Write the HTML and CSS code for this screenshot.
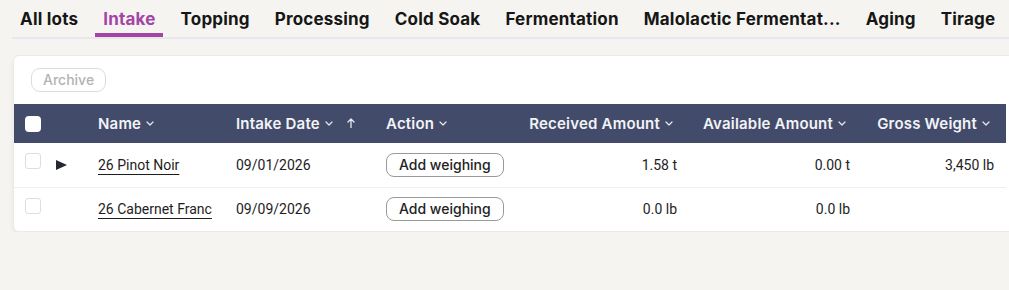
FILE: index.html
```html
<!DOCTYPE html>
<html>
<head>
<meta charset="utf-8">
<link rel="stylesheet" href="styles.css">
</head>
<body>
<nav class="tabs">
  <a class="tab">All lots</a>
  <a class="tab active">Intake</a>
  <a class="tab">Topping</a>
  <a class="tab">Processing</a>
  <a class="tab">Cold Soak</a>
  <a class="tab">Fermentation</a>
  <a class="tab">Malolactic Fermentat...</a>
  <a class="tab">Aging</a>
  <a class="tab">Tirage</a>
</nav>
<section class="card">
  <div class="toolbar"><button class="archive">Archive</button></div>
  <table class="grid">
    <colgroup>
      <col class="c-check"><col class="c-exp"><col class="c-name"><col class="c-date"><col class="c-action"><col class="c-recv"><col class="c-avail"><col class="c-gross">
    </colgroup>
    <thead>
      <tr>
        <th class="chk"><span class="hbox"></span></th>
        <th></th>
        <th>Name<svg class="chev" viewBox="0 0 8 5"><path d="M1 1l3 3 3-3"/></svg></th>
        <th>Intake Date<svg class="chev" viewBox="0 0 8 5"><path d="M1 1l3 3 3-3"/></svg><svg class="sort" viewBox="0 0 8 10"><path d="M4 9.5V1M1 4l3-3 3 3"/></svg></th>
        <th>Action<svg class="chev" viewBox="0 0 8 5"><path d="M1 1l3 3 3-3"/></svg></th>
        <th class="num">Received Amount<svg class="chev" viewBox="0 0 8 5"><path d="M1 1l3 3 3-3"/></svg></th>
        <th class="num">Available Amount<svg class="chev" viewBox="0 0 8 5"><path d="M1 1l3 3 3-3"/></svg></th>
        <th class="num">Gross Weight<svg class="chev" viewBox="0 0 8 5"><path d="M1 1l3 3 3-3"/></svg></th>
      </tr>
    </thead>
    <tbody>
      <tr>
        <td class="chk"><span class="rbox"></span></td>
        <td class="exp"><svg class="play" viewBox="0 0 11 10"><path d="M0 0L11 5L0 10Z"/></svg></td>
        <td><a class="lot">26 Pinot Noir</a></td>
        <td>09/01/2026</td>
        <td><button class="weigh">Add weighing</button></td>
        <td class="num">1.58 t</td>
        <td class="num">0.00 t</td>
        <td class="num">3,450 lb</td>
      </tr>
      <tr>
        <td class="chk"><span class="rbox"></span></td>
        <td class="exp"></td>
        <td><a class="lot">26 Cabernet Franc</a></td>
        <td>09/09/2026</td>
        <td><button class="weigh">Add weighing</button></td>
        <td class="num">0.0 lb</td>
        <td class="num">0.0 lb</td>
        <td class="num"></td>
      </tr>
    </tbody>
  </table>
</section>
</body>
</html>
```
FILE: styles.css
```css
html, body {
  margin: 0;
  padding: 0;
  background: #f5f4f0;
  overflow: hidden;
  font-family: Inter, "Noto Sans", sans-serif;
  color: #1c1c1c;
}

.tabs {
  display: flex;
  margin: 0 0 0 12px;
  height: 37px;
  border-bottom: 2px solid #e8e7ef;
  white-space: nowrap;
}

.tab {
  display: block;
  padding: 9px 7px 0 8px;
  margin-right: 10px;
  font-size: 17px;
  font-weight: 700;
  letter-spacing: 0.2px;
  line-height: 20px;
  color: #161616;
  border-bottom: 4px solid transparent;
  box-sizing: border-box;
  height: 37px;
}

.tab.active {
  color: #a445a6;
  border-bottom-color: #a445a6;
}

.card {
  margin: 16px 0 0 13px;
  width: 1040px;
  background: #fff;
  border: 1px solid #ebeae6;
  border-radius: 6px;
  box-shadow: 0 3px 5px rgba(0, 0, 0, 0.06);
  overflow: hidden;
}

.toolbar {
  padding: 12px 17px 12px;
}

.archive {
  font-family: Inter, sans-serif;
  font-size: 14px;
  font-weight: 500;
  color: #b3b3b3;
  background: #fff;
  border: 1px solid #dcdcdc;
  border-radius: 9px;
  height: 24px;
  padding: 0 11px;
  line-height: 20px;
}

.grid {
  border-collapse: collapse;
  table-layout: fixed;
  width: 992px;
}

.c-check { width: 30px; }
.c-exp { width: 42px; }
.c-name { width: 138px; }
.c-date { width: 150px; }
.c-action { width: 142px; }
.c-recv { width: 173px; }
.c-avail { width: 173px; }
.c-gross { width: 144px; }

thead tr {
  background: #424c6a;
  height: 39px;
}

th {
  color: #f2f3f7;
  font-size: 15px;
  font-weight: 600;
  letter-spacing: 0.2px;
  text-align: left;
  padding: 0 12px;
  white-space: nowrap;
  overflow: hidden;
}

th.num { text-align: right; padding-right: 16px; }
td.num { text-align: right; }

th.chk, td.chk { padding: 0 0 0 11px; }

.hbox {
  display: block;
  width: 16px;
  height: 16px;
  background: #fff;
  border-radius: 4px;
}

.chev {
  width: 8px;
  height: 5px;
  margin-left: 5px;
  vertical-align: 3px;
  fill: none;
  stroke: #e8eaf0;
  stroke-width: 1.2;
  stroke-linecap: round;
  stroke-linejoin: round;
}

.sort {
  width: 8px;
  height: 10px;
  margin-left: 14px;
  vertical-align: 1px;
  fill: none;
  stroke: #e8eaf0;
  stroke-width: 1.3;
  stroke-linecap: round;
  stroke-linejoin: round;
}

tbody tr {
  height: 44px;
  border-bottom: 1px solid #efefef;
}

tbody tr:last-child { border-bottom: none; }

td {
  font-family: Roboto, "Liberation Sans", sans-serif;
  font-size: 14px;
  color: #1e1e1e;
  padding: 0 12px;
  white-space: nowrap;
}

td.chk { vertical-align: top; padding-top: 10px; }

.rbox {
  display: block;
  width: 14px;
  height: 14px;
  border: 1px solid #dedede;
  border-radius: 3px;
}

td.exp { padding-left: 12px; }

.play {
  display: block;
  width: 11px;
  height: 10px;
  fill: #252833;
}

.lot {
  color: #1e1e1e;
  text-decoration: underline;
  text-underline-offset: 4px;
  text-decoration-thickness: 1px;
}

.weigh {
  font-family: Inter, sans-serif;
  font-size: 14px;
  font-weight: 500;
  color: #232323;
  background: #fff;
  border: 1px solid #9a9a9a;
  border-radius: 8px;
  height: 24px;
  padding: 0 12px;
  line-height: 20px;
}
```
